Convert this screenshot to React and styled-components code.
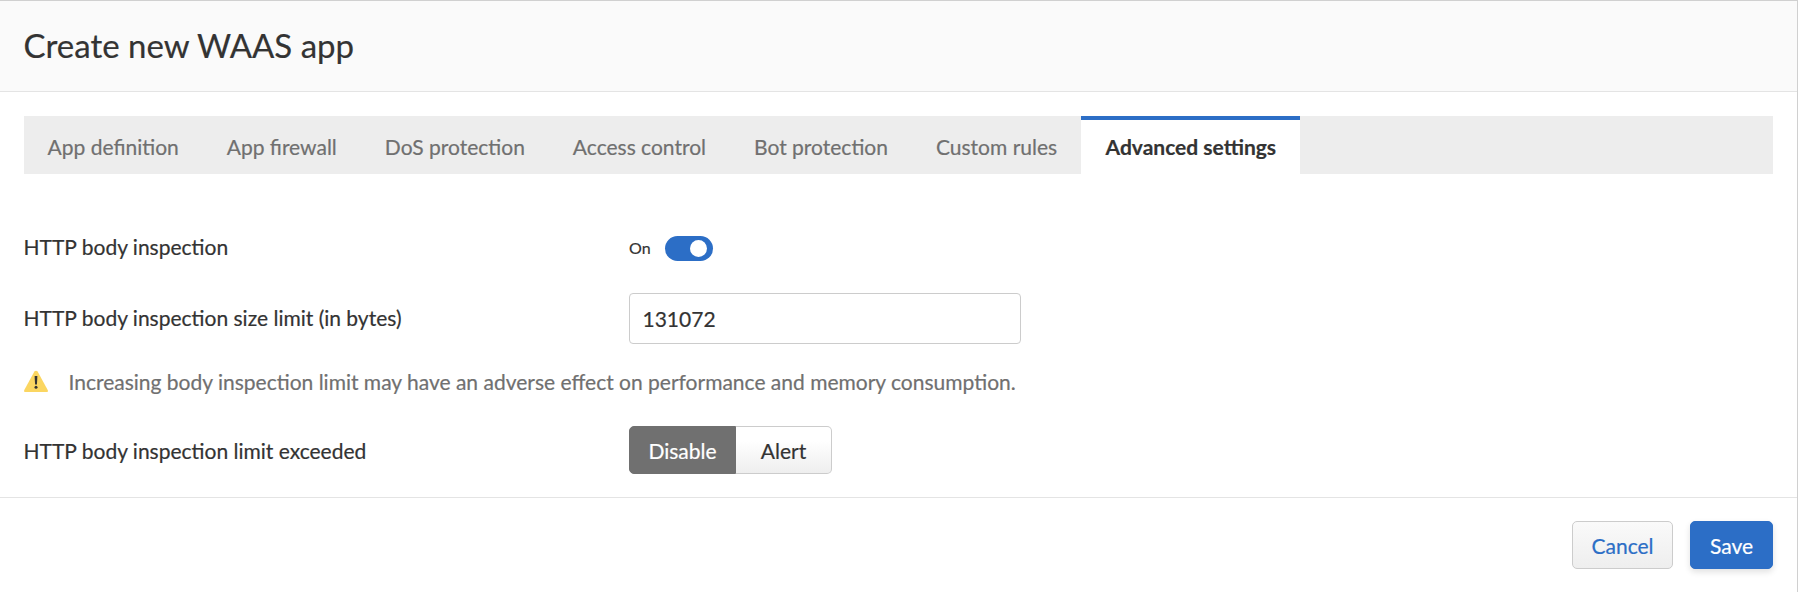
import React, { useState } from "react";
import styled, { createGlobalStyle } from "styled-components";

const GlobalStyle = createGlobalStyle`
  *, *::before, *::after { box-sizing: border-box; }
  body {
    margin: 0;
    background: #fff;
    color: #333;
    font: 400 21px/30px Lato, "Liberation Sans", sans-serif;
    -webkit-text-stroke: 0.2px currentColor;
  }
  button, input { font: inherit; color: inherit; margin: 0; }
`;

const Dialog = styled.div`
  display: flex;
  flex-direction: column;
  height: 592px;
  overflow: hidden;
  border-top: 1px solid #d0d0d0;
  border-right: 1px solid #d0d0d0;
`;

const Header = styled.header`
  display: flex;
  align-items: center;
  height: 91px;
  padding: 0 23.5px 2px;
  background: #fafafa;
  border-bottom: 1px solid #e4e4e4;
`;

const Title = styled.h1`
  margin: 0;
  font-size: 33px;
  line-height: 40px;
  font-weight: 400;
`;

const Body = styled.main`
  display: flex;
  flex-direction: column;
  height: 405px;
  padding: 24px 24px 0;
`;

const TabBar = styled.div`
  display: flex;
  height: 58px;
  margin-bottom: 50px;
  background: #ededed;
`;

const Tab = styled.button`
  padding: 0 24px;
  border: 0;
  border-top: 4px solid ${(p) => (p.$active ? "#2c6ec6" : "transparent")};
  background: ${(p) => (p.$active ? "#fff" : "transparent")};
  color: ${(p) => (p.$active ? "#333" : "#707070")};
  font-weight: ${(p) => (p.$active ? 700 : 400)};
  white-space: nowrap;

  &:first-child { padding-left: 23.6px; }
  &:nth-last-child(2) { padding-right: 23.4px; }
  &:last-child { padding: 0 24px 0 25px; }
`;

const Field = styled.div`
  display: grid;
  grid-template-columns: 605px auto;
  justify-content: start;
  align-items: center;
  height: ${(p) => p.$height}px;
  margin-bottom: ${(p) => p.$gap || 0}px;
`;

const Label = styled.label`
  padding-top: ${(p) => p.$drop || 0}px;
  padding-bottom: ${(p) => p.$lift || 0}px;
  margin-left: -0.5px;
  white-space: nowrap;
`;

const SwitchGroup = styled.div`
  display: flex;
  align-items: center;
  gap: 14px;
`;

const SwitchState = styled.span`
  font-size: 16px;
  line-height: 24px;
`;

const Switch = styled.button`
  display: flex;
  align-items: center;
  justify-content: ${(p) => (p.$on ? "flex-end" : "flex-start")};
  width: 48px;
  height: 25px;
  padding: 0 6px;
  border: 0;
  border-radius: 13px;
  background: ${(p) => (p.$on ? "#2c6ec6" : "#a0a0a0")};
`;

const Knob = styled.span`
  width: 17px;
  height: 17px;
  border-radius: 50%;
  background: #fff;
`;

const TextInput = styled.input`
  width: 392px;
  height: 51px;
  padding: 0 12.5px;
  border: 1px solid #ccc;
  border-radius: 4px;
  background: #fff;
  outline: none;
`;

const Notice = styled.div`
  display: flex;
  align-items: center;
  gap: 21px;
  height: 30px;
  margin-bottom: 29px;
  color: #707070;
`;

const Segments = styled.div`
  display: flex;
  height: 48px;
`;

const Segment = styled.button`
  width: ${(p) => p.$width}px;
  padding: 2px 0 0;
  border: 1px solid ${(p) => (p.$active ? "#707070" : "#ccc")};
  background: ${(p) => (p.$active ? "#707070" : "linear-gradient(#fff 30%, #eee)")};
  color: ${(p) => (p.$active ? "#fff" : "#333")};

  &:first-child { border-radius: 5px 0 0 5px; }
  &:last-child { border-left: 0; border-radius: 0 5px 5px 0; }
`;

const Footer = styled.footer`
  display: flex;
  justify-content: flex-end;
  gap: 17px;
  height: 95px;
  padding: 23px 24px 0;
  border-top: 1px solid #e4e4e4;
`;

const Button = styled.button`
  width: ${(p) => (p.$primary ? 83 : 101)}px;
  height: 48px;
  padding: 2px 0 0;
  border: 1px solid ${(p) => (p.$primary ? "#2c6ec6" : "#ccc")};
  border-radius: 5px;
  background: ${(p) => (p.$primary ? "#2c6ec6" : "linear-gradient(#fafafa, #eee)")};
  color: ${(p) => (p.$primary ? "#fff" : "#2c6ec6")};
  box-shadow: ${(p) => (p.$primary ? "0 3px 6px rgba(0, 0, 0, 0.12)" : "none")};
`;

const WarningIcon = () => (
  <svg width="24" height="24" viewBox="0 0 24 24" aria-hidden="true">
    <path d="M10.4 1.6C11.2.4 12.8.4 13.6 1.6L23.7 20C24.3 21.1 23.8 22 22.6 22H1.4C.2 22-.3 21.1.3 20Z" fill="#fbd661" />
    <path d="M10.6 6H13.4L12.9 14.4H11.1Z" fill="#333" />
    <circle cx="12" cy="17.3" r="1.5" fill="#333" />
  </svg>
);

const tabs = [
  "App definition",
  "App firewall",
  "DoS protection",
  "Access control",
  "Bot protection",
  "Custom rules",
  "Advanced settings",
];

export default function App() {
  const [tab, setTab] = useState("Advanced settings");
  const [on, setOn] = useState(true);
  const [limit, setLimit] = useState("131072");
  const [effect, setEffect] = useState("Disable");

  return (
    <>
      <GlobalStyle />
      <Dialog>
        <Header>
          <Title>Create new WAAS app</Title>
        </Header>
        <Body>
          <TabBar>
            {tabs.map((t) => (
              <Tab key={t} $active={t === tab} onClick={() => setTab(t)}>
                {t}
              </Tab>
            ))}
          </TabBar>
          <Field $height={48} $gap={21}>
            <Label $lift={2}>HTTP body inspection</Label>
            <SwitchGroup>
              <SwitchState>{on ? "On" : "Off"}</SwitchState>
              <Switch $on={on} onClick={() => setOn(!on)}>
                <Knob />
              </Switch>
            </SwitchGroup>
          </Field>
          <Field $height={51} $gap={23}>
            <Label $lift={2}>HTTP body inspection size limit (in bytes)</Label>
            <TextInput value={limit} onChange={(e) => setLimit(e.target.value)} />
          </Field>
          <Notice>
            <WarningIcon />
            <Label>
              Increasing body inspection limit may have an adverse effect on performance and memory consumption.
            </Label>
          </Notice>
          <Field $height={48}>
            <Label $drop={2}>HTTP body inspection limit exceeded</Label>
            <Segments>
              <Segment $width={107} $active={effect === "Disable"} onClick={() => setEffect("Disable")}>
                Disable
              </Segment>
              <Segment $width={96} $active={effect === "Alert"} onClick={() => setEffect("Alert")}>
                Alert
              </Segment>
            </Segments>
          </Field>
        </Body>
        <Footer>
          <Button>Cancel</Button>
          <Button $primary>Save</Button>
        </Footer>
      </Dialog>
    </>
  );
}
